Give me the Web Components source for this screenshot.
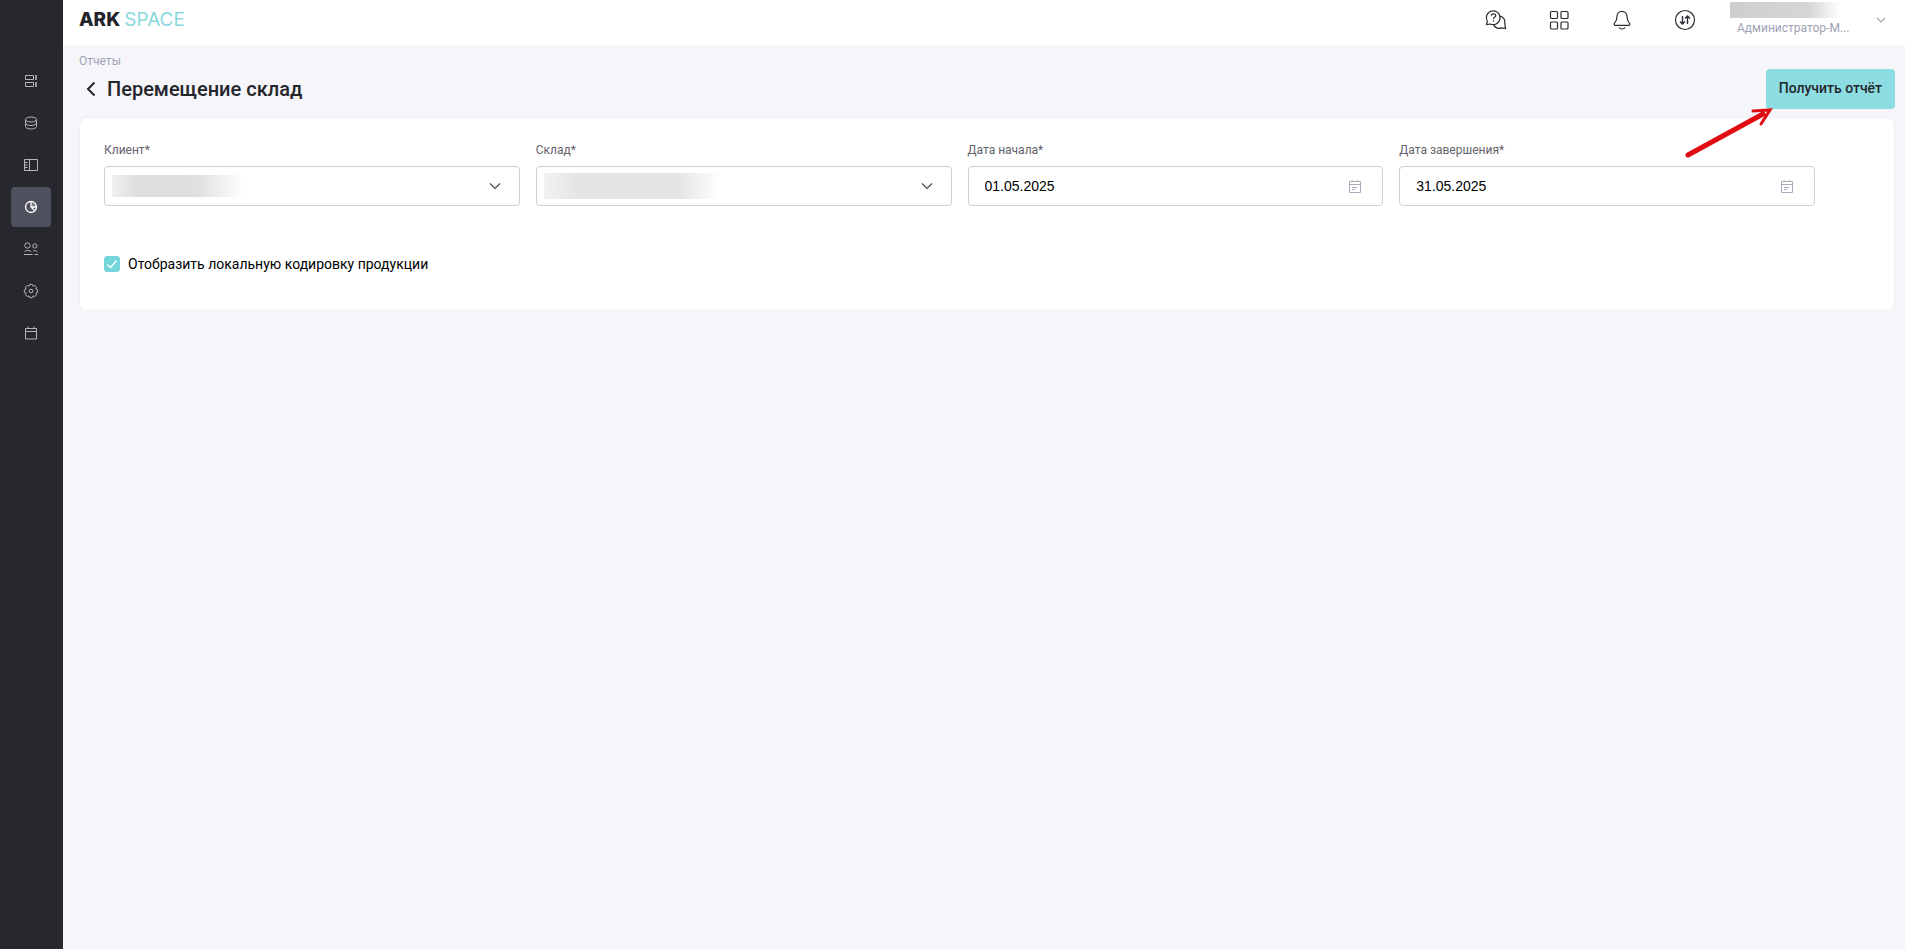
<!DOCTYPE html>
<html lang="ru">
<head>
  <meta charset="UTF-8" />
  <meta name="viewport" content="width=device-width, initial-scale=1.0" />
  <title>Перемещение склад</title>
  <style>
    body {
      margin: 0;
      background-color: #f5f5fa;
      color: #24252b;
      font-family: Roboto, "Liberation Sans", sans-serif;
    }

    .filters {
      display: grid;
      grid-template-columns: repeat(4, minmax(0, 1fr));
      gap: 16px;
      margin-bottom: 48px;
    }
  </style>
</head>
<body>
  <app-shell>
    <app-sidebar slot="sidebar"></app-sidebar>
    <app-header slot="header"></app-header>
    <page-heading parent="Отчеты" heading="Перемещение склад">Получить отчёт</page-heading>
    <report-card>
      <div class="filters">
        <select-field label="Клиент*" mask="client"></select-field>
        <select-field label="Склад*" mask="stock"></select-field>
        <date-field label="Дата начала*" value="01.05.2025"></date-field>
        <date-field label="Дата завершения*" value="31.05.2025"></date-field>
      </div>
      <check-field>Отобразить локальную кодировку продукции</check-field>
    </report-card>
  </app-shell>

  <script>
    class AppShell extends HTMLElement {
      connectedCallback() {
        this.attachShadow({ mode: "open" });
        this.shadowRoot.innerHTML = `
          <style>
            :host {
              display: flex;
              min-height: 100vh;
            }

            .content {
              flex: 1;
              min-width: 0;
            }

            main {
              padding: 8px 10px 16px 16px;
            }
          </style>

          <slot name="sidebar"></slot>
          <div class="content">
            <slot name="header"></slot>
            <main><slot></slot></main>
          </div>
        `;
      }
    }

    class AppSidebar extends HTMLElement {
      connectedCallback() {
        this.attachShadow({ mode: "open" });
        this.shadowRoot.innerHTML = `
          <style>
            :host {
              display: block;
              flex: none;
              width: 63px;
              background-color: #27282d;
            }

            nav {
              display: flex;
              flex-direction: column;
              gap: 2px;
              padding: 61px 0 0 11px;
            }

            a {
              display: flex;
              align-items: center;
              justify-content: center;
              width: 40px;
              height: 40px;
              border-radius: 4px;
              color: #b4b5be;
            }

            a.active {
              background-color: #4f505e;
              color: #ffffff;
            }

            svg {
              width: 16px;
              height: 16px;
              fill: none;
              stroke: currentColor;
              overflow: visible;
            }
          </style>

          <nav>
            <a href="#dashboard" aria-label="Панель">
              <svg viewBox="0 0 16 16"><path d="M2.5 2.5h8v4h-8zM2.5 9.5h8v4h-8z"/><path d="M13 2v5M13 9v5" stroke-width="1.6"/></svg>
            </a>
            <a href="#data" aria-label="Данные">
              <svg viewBox="0 0 16 16"><ellipse cx="8" cy="4.5" rx="5.5" ry="2.5"/><path d="M2.5 4.5v7c0 1.4 2.5 2.5 5.5 2.5s5.5-1.1 5.5-2.5v-7M2.5 8c0 1.4 2.5 2.5 5.5 2.5s5.500-1.1 5.500-2.5"/></svg>
            </a>
            <a href="#warehouse" aria-label="Склад">
              <svg viewBox="0 0 16 16"><path d="M1.5 2.500h13v11h-13zM6.500 2.500v11M1.500 5.500h3M1.500 8h3M1.500 10.500h3"/></svg>
            </a>
            <a href="#reports" class="active" aria-label="Отчеты">
              <svg viewBox="0 0 16 16" stroke-width="1.3"><circle cx="8" cy="8" r="5.500"/><path d="M8 2.500V8l4 4M8 8h5.500"/><path d="M8.500 3v5h4.800c0-2.600-2-5-4.800-5z" fill="currentColor" fill-opacity=".25" stroke="none"/></svg>
            </a>
            <a href="#users" aria-label="Пользователи">
              <svg viewBox="0 0 16 16"><circle cx="4.500" cy="4.500" r="2.700"/><circle cx="11.800" cy="5" r="2.100"/><path d="M1 13.500h8.500M1.500 10.500c1.800-1.500 5.500-1.500 7 .8M10 10c1.500-.7 3.500-.4 4.500 1M11.500 13.500H15"/></svg>
            </a>
            <a href="#settings" aria-label="Настройки">
              <svg viewBox="0 0 16 16" stroke-linejoin="round"><circle cx="8" cy="8" r="1.800"/><path d="M14.700 6.800v2.400L12.900 10l.6 1.800-1.700 1.700-1.800-.6-.8 1.800H6.800L6 12.900l-1.800.6-1.700-1.700.6-1.800-1.800-.8V6.800L3.100 6l-.6-1.800 1.700-1.700 1.800.6.8-1.800h2.400l.8 1.800 1.800-.6 1.700 1.700-.6 1.800z"/></svg>
            </a>
            <a href="#calendar" aria-label="Календарь">
              <svg viewBox="0 0 16 16"><path d="M2.500 3.500h11v10.500h-11zM2.500 6.500h11M5 1.500v2M11 1.500v2"/></svg>
            </a>
          </nav>
        `;
      }
    }

    class AppHeader extends HTMLElement {
      connectedCallback() {
        this.attachShadow({ mode: "open" });
        this.shadowRoot.innerHTML = `
          <style>
            header {
              display: flex;
              align-items: center;
              justify-content: space-between;
              box-sizing: border-box;
              height: 45px;
              padding: 0 12px 5px 16px;
              background-color: #ffffff;
            }

            .logo {
              display: flex;
              align-items: center;
              gap: 4px;
              color: #24252b;
              font: 800 19px/28px Inter, sans-serif;
              text-decoration: none;
            }

            .logo span {
              color: #88dade;
              font-weight: 400;
            }

            .right,
            .tools,
            .user {
              display: flex;
              align-items: center;
            }

            .right {
              gap: 33px;
            }

            .tools {
              gap: 39px;
            }

            button {
              padding: 0;
              border: none;
              background: none;
              cursor: pointer;
              font: inherit;
              line-height: 0;
            }

            svg {
              fill: none;
              stroke: #2b2c33;
              stroke-width: 1.2;
              overflow: visible;
            }

            .user {
              gap: 14px;
              text-align: left;
            }

            .account {
              display: block;
              width: 125px;
              height: 36px;
            }

            .name {
              display: block;
              width: 110px;
              height: 16px;
              margin-bottom: 2px;
              background: linear-gradient(90deg, #cecece, #d6d6d6 72%, #ffffff);
            }

            .role {
              display: block;
              padding-left: 7px;
              color: #9ea2b5;
              font-size: 12px;
              line-height: 16px;
              white-space: nowrap;
            }

            .chevron {
              stroke: #a5a6ad;
            }
          </style>

          <header>
            <a class="logo" href="#home">ARK<span>SPACE</span></a>
            <div class="right">
              <div class="tools">
                <button aria-label="Помощь">
                  <svg width="24" height="24" viewBox="0 0 24 24"><path d="M2.500 16.500l.8-3.200a6.900 6.900 0 1 1 3 2.700zM15.800 8c3.700.8 6 4.200 5 7.900l.7 4.600-4-.6c-3 1-6.200-.1-7.800-3"/><path d="M7.300 7.800c0-2.700 4.400-2.600 4.400-.1 0 1.700-2.200 1.600-2.200 3.200M9.500 12.200v1.300"/></svg>
                </button>
                <button aria-label="Приложения">
                  <svg width="24" height="24" viewBox="0 0 24 24"><rect x="3.500" y="3.500" width="7" height="7" rx="1"/><rect x="14" y="3.500" width="7" height="7" rx="1"/><rect x="3.500" y="14" width="7" height="7" rx="1"/><rect x="14" y="14" width="7" height="7" rx="1"/></svg>
                </button>
                <button aria-label="Уведомления">
                  <svg width="24" height="24" viewBox="0 0 24 24"><path d="M12 3.300c-3 0-5 2.300-5 5.200 0 3.300-.8 5-2.400 6.700-.8.900-.4 2.200.8 2.200h13.200c1.200 0 1.600-1.300.8-2.200-1.600-1.700-2.400-3.400-2.400-6.700 0-2.900-2-5.200-5-5.200zM9 19.500c1 2 5 2 6 0"/></svg>
                </button>
                <button aria-label="Обмен">
                  <svg width="24" height="24" viewBox="0 0 24 24"><circle cx="12" cy="12" r="9.500"/><path d="M9.500 8v8M7 13.500l2.500 2.500 2.500-2.500M14.500 16V8M12 10.500L14.500 8l2.500 2.500" stroke-width="1.400"/></svg>
                </button>
              </div>
              <button class="user" aria-label="Профиль">
                <span class="account">
                  <span class="name"></span>
                  <span class="role">Администратор-М...</span>
                </span>
                <svg class="chevron" width="24" height="24" viewBox="0 0 24 24"><path d="M8 10l4 4 4-4"/></svg>
              </button>
            </div>
          </header>
        `;
      }
    }

    class PageHeading extends HTMLElement {
      connectedCallback() {
        this.attachShadow({ mode: "open" });
        this.shadowRoot.innerHTML = `
          <style>
            :host {
              display: block;
              position: relative;
            }

            .breadcrumb {
              display: block;
              width: max-content;
              color: #9ea2b5;
              font-size: 12px;
              line-height: 16px;
              text-decoration: none;
            }

            .row {
              display: flex;
              align-items: center;
              justify-content: space-between;
              margin-bottom: 8px;
            }

            .title {
              display: flex;
              align-items: center;
              gap: 4px;
            }

            h1 {
              margin: 0;
              font-size: 20px;
              font-weight: 500;
              line-height: 24px;
            }

            button {
              border: none;
              cursor: pointer;
            }

            .back {
              width: 24px;
              height: 24px;
              padding: 0;
              background: none;
            }

            .back svg {
              display: block;
              fill: none;
              stroke: #24252b;
              stroke-width: 2;
            }

            .submit {
              height: 40px;
              padding: 0 13px 2px;
              border-radius: 4px;
              background-color: #8cdde1;
              color: #24252b;
              font: 500 14px/20px Roboto, sans-serif;
            }

            /* Pointer laid over the page, towards the button */
            .pointer {
              position: absolute;
              top: 52px;
              right: 120px;
              z-index: 1;
              fill: none;
              stroke: #df0c12;
              stroke-linecap: round;
              pointer-events: none;
            }
          </style>

          <a class="breadcrumb" href="#reports">${this.getAttribute("parent")}</a>
          <div class="row">
            <div class="title">
              <button class="back" aria-label="Назад">
                <svg width="24" height="24" viewBox="0 0 24 24"><path d="M15.500 5.500L9 12l6.500 6.500"/></svg>
              </button>
              <h1>${this.getAttribute("heading")}</h1>
            </div>
            <button class="submit"><slot></slot></button>
          </div>
          <svg class="pointer" width="92" height="56" viewBox="0 0 92 56">
            <path d="M5 50L80 9" stroke-width="5"/>
            <path d="M70 6l17-1-9 14" stroke-width="3"/>
          </svg>
        `;
      }
    }

    class ReportCard extends HTMLElement {
      connectedCallback() {
        this.attachShadow({ mode: "open" });
        this.shadowRoot.innerHTML = `
          <style>
            :host {
              display: block;
              padding: 24px 79px 34px 24px;
              border: 1px solid #f0f0f4;
              border-radius: 8px;
              background-color: #ffffff;
            }
          </style>

          <slot></slot>
        `;
      }
    }

    class SelectField extends HTMLElement {
      connectedCallback() {
        this.attachShadow({ mode: "open" });
        this.shadowRoot.innerHTML = `
          <style>
            :host {
              display: block;
            }

            label {
              display: block;
              margin-bottom: 8px;
              color: #62636b;
              font-size: 12px;
              line-height: 16px;
            }

            .control {
              display: grid;
              align-items: center;
            }

            .control > * {
              grid-area: 1 / 1;
            }

            select {
              appearance: none;
              box-sizing: border-box;
              width: 100%;
              height: 40px;
              padding: 0 48px 0 16px;
              border: 1px solid #d0d0d8;
              border-radius: 4px;
              background-color: #ffffff;
              font: 14px/20px Roboto, sans-serif;
            }

            svg {
              justify-self: end;
              margin-right: 13px;
              fill: none;
              stroke: #4b4c54;
              stroke-width: 1.2;
              pointer-events: none;
            }

            .mask {
              margin-left: 8px;
              pointer-events: none;
            }

            .client {
              width: 132px;
              height: 22px;
              background: linear-gradient(90deg, #efefef, #dedede 20%, #e0e0e0 65%, #ffffff);
            }

            .stock {
              width: 176px;
              height: 26px;
              background: linear-gradient(90deg, #f2f2f2, #e4e4e4 20%, #e4e4e4 75%, #ffffff);
            }
          </style>

          <label for="field">${this.getAttribute("label")}</label>
          <div class="control">
            <select id="field"><option></option></select>
            <span class="mask ${this.getAttribute("mask")}"></span>
            <svg width="24" height="24" viewBox="0 0 24 24"><path d="M7 9.500l5 5 5-5"/></svg>
          </div>
        `;
      }
    }

    class DateField extends HTMLElement {
      connectedCallback() {
        this.attachShadow({ mode: "open" });
        this.shadowRoot.innerHTML = `
          <style>
            :host {
              display: block;
            }

            label {
              display: block;
              margin-bottom: 8px;
              color: #62636b;
              font-size: 12px;
              line-height: 16px;
            }

            .control {
              display: flex;
              align-items: center;
              box-sizing: border-box;
              height: 40px;
              padding: 0 19px 0 16px;
              border: 1px solid #d0d0d8;
              border-radius: 4px;
            }

            input {
              flex: 1;
              min-width: 0;
              padding: 0;
              border: none;
              outline: none;
              background: none;
              color: #000000;
              font: 14px/20px "Liberation Sans", Arial, sans-serif;
            }

            button {
              padding: 0;
              border: none;
              background: none;
              line-height: 0;
              cursor: pointer;
            }

            svg {
              fill: none;
              stroke: #a9abba;
            }
          </style>

          <label for="field">${this.getAttribute("label")}</label>
          <div class="control">
            <input id="field" type="text" value="${this.getAttribute("value")}" />
            <button aria-label="Открыть календарь">
              <svg width="16" height="16" viewBox="0 0 16 16"><path d="M2.500 3.500h11v11h-11zM2.500 6.500h11M5 2v2M11 2v2M5 9.500h5M5 11.500h3"/></svg>
            </button>
          </div>
        `;
      }
    }

    class CheckField extends HTMLElement {
      connectedCallback() {
        this.attachShadow({ mode: "open" });
        this.shadowRoot.innerHTML = `
          <style>
            :host {
              display: block;
            }

            label {
              display: inline-flex;
              align-items: center;
              gap: 8px;
              color: #000000;
              font-size: 14px;
              line-height: 20px;
              cursor: pointer;
            }

            .box {
              display: grid;
            }

            .box > * {
              grid-area: 1 / 1;
            }

            input {
              appearance: none;
              width: 16px;
              height: 16px;
              margin: 0;
              border: 1px solid #d0d0d8;
              border-radius: 3px;
            }

            input:checked {
              border-color: #74d5da;
              background-color: #74d5da;
            }

            svg {
              fill: none;
              stroke: #ffffff;
              stroke-width: 1.4;
              pointer-events: none;
            }

            input:not(:checked) + svg {
              display: none;
            }
          </style>

          <label>
            <span class="box">
              <input type="checkbox" checked />
              <svg width="16" height="16" viewBox="0 0 16 16"><path d="M3.500 8.500l3 3 6-7"/></svg>
            </span>
            <slot></slot>
          </label>
        `;
      }
    }

    customElements.define("app-shell", AppShell);
    customElements.define("app-sidebar", AppSidebar);
    customElements.define("app-header", AppHeader);
    customElements.define("page-heading", PageHeading);
    customElements.define("report-card", ReportCard);
    customElements.define("select-field", SelectField);
    customElements.define("date-field", DateField);
    customElements.define("check-field", CheckField);
  </script>
</body>
</html>
